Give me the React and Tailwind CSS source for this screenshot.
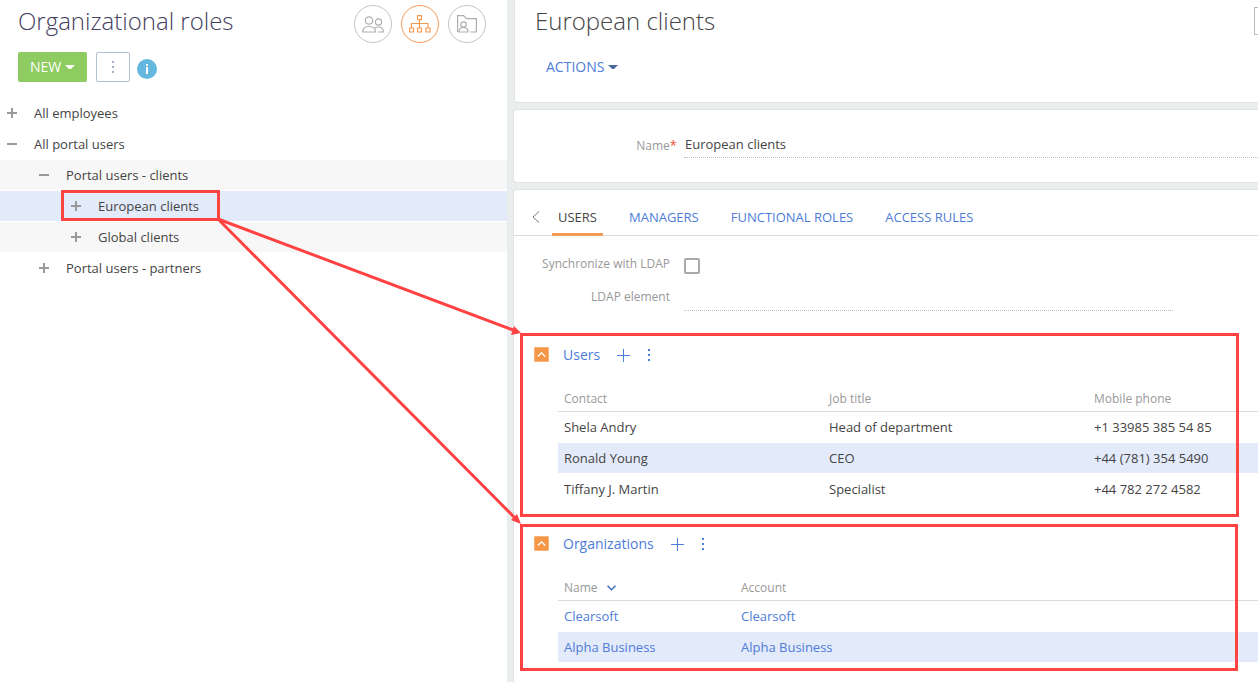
import React, { useState } from "react";

const treeRows = [
  { id: 1, name: "All employees", level: 0, open: false },
  { id: 2, name: "All portal users", level: 0, open: true },
  { id: 3, name: "Portal users - clients", level: 1, open: true, shaded: true },
  { id: 4, name: "European clients", level: 2, open: false, marked: true },
  { id: 5, name: "Global clients", level: 2, open: false, shaded: true },
  { id: 6, name: "Portal users - partners", level: 1, open: false },
];

const levelPadding = ["pl-[7px]", "pl-[39px]", "pl-[71px]"];

const users = [
  { name: "Shela Andry", job: "Head of department", phone: "+1 33985 385 54 85" },
  { name: "Ronald Young", job: "CEO", phone: "+44 (781) 354 5490" },
  { name: "Tiffany J. Martin", job: "Specialist", phone: "+44 782 272 4582" },
];

const organizations = [
  { name: "Clearsoft", account: "Clearsoft" },
  { name: "Alpha Business", account: "Alpha Business" },
];

const tabs = ["Users", "Managers", "Functional roles", "Access rules"];

const Caret = ({ className }) => (
  <svg width="10" height="5" viewBox="0 0 10 5" className={className}>
    <path d="M0 0h10L6 4H4z" fill="currentColor" />
  </svg>
);

const Dots = ({ className }) => (
  <svg width="2" height="12" viewBox="0 0 2 12" className={className}>
    <path d="M0 0h2v2H0zM0 5h2v2H0zM0 10h2v2H0z" fill="currentColor" />
  </svg>
);

const ToggleIcon = ({ open }) => (
  <svg width="10" height="10" viewBox="0 0 10 10" fill="#999">
    <path d="M0 4h10v2H0z" />
    {!open && <path d="M4 0h2v10H4z" />}
  </svg>
);

const UsersIcon = () => (
  <svg width="22" height="17" viewBox="0 0 22 17" fill="none" stroke="#adadad" strokeWidth="1.200">
    <circle cx="7" cy="4.500" r="3.700" />
    <circle cx="16.500" cy="6" r="3.100" />
    <path d="M.6 16c0-3.500 2.500-5.500 6.400-5.500s6.500 2 6.500 5.500zM13 12c1-.8 2-1 3.500-1 3 0 4.900 1.800 4.900 5h-5.400" />
  </svg>
);

const OrgIcon = () => (
  <svg width="22" height="18" viewBox="0 0 22 18" fill="none" stroke="#f39a54" strokeWidth="1.200">
    <path d="M8.500 .6h4v4h-4zM.6 13h4v4h-4zM8.500 13h4v4h-4zM17 13h4v4h-4zM10.500 4.500V13M2.500 13V8.500h16.500V13" />
  </svg>
);

const FolderIcon = () => (
  <svg width="20" height="18" viewBox="0 0 20 18" fill="none" stroke="#adadad" strokeWidth="1.200">
    <path d="M.6 17V.6h6l3 3h9.800v13.400h-6" />
    <circle cx="6.500" cy="9.500" r="2.700" />
    <path d="M2 17c0-2.800 1.700-4.500 4.500-4.500s4.500 1.700 4.500 4.500z" />
  </svg>
);

const RoundButton = ({ label, active, children }) => (
  <button
    aria-label={label}
    className={
      active
        ? "size-[38px] rounded-full border border-[#f39a54] flex items-center justify-center"
        : "size-[38px] rounded-full border border-[#c4c4c4] flex items-center justify-center"
    }
  >
    {children}
  </button>
);

const Callout = ({ className }) => (
  <div
    className={`absolute border-[3px] border-[#ff4343] pointer-events-none ${className}`}
  ></div>
);

const Arrows = () => (
  <svg
    width="530"
    height="530"
    viewBox="0 0 530 530"
    className="absolute top-0 left-0 pointer-events-none"
    stroke="#ff4343"
    fill="#ff4343"
  >
    <path d="M218 219L513 330M218 219L515 518" strokeWidth="3" fill="none" />
    <path d="M521 333L511 335L514 326z" stroke="none" />
    <path d="M521 524L511 520L517 514z" stroke="none" />
  </svg>
);

const DetailHeader = ({ title }) => (
  <div className="flex items-center h-6 pl-5">
    <button
      aria-label={`Collapse ${title}`}
      className="size-[15px] -mt-px bg-[#f49646] border border-[#f7b27a] rounded-[1px] flex items-center justify-center"
    >
      <svg width="9" height="5" viewBox="0 0 9 5" fill="none" stroke="#fff" strokeWidth="1.300">
        <path d="M.8 4.500l3.700-3.700 3.700 3.700" />
      </svg>
    </button>
    <h2 className="ml-3.5 text-[14px] text-[#4e7cd9]">{title}</h2>
    <button aria-label={`Add to ${title}`} className="ml-[17px]">
      <svg width="13" height="13" viewBox="0 0 13 13" stroke="#4e7cd9">
        <path d="M0 6.500h13M6.500 0v13" />
      </svg>
    </button>
    <button aria-label={`${title} menu`} className="ml-[18px] text-[#4e7cd9]">
      <Dots />
    </button>
  </div>
);

const LeftPanel = () => (
  <aside className="w-[507px] shrink-0 bg-white">
    <div className="flex justify-between pl-[18px] pr-[21px] pt-[5px] h-[52px]">
      <h1 className="text-[24px] leading-8 font-light text-[#444060]">
        Organizational roles
      </h1>
      <div className="flex gap-[9px] h-[38px]">
        <RoundButton label="Users">
          <UsersIcon />
        </RoundButton>
        <RoundButton label="Organizational roles" active>
          <OrgIcon />
        </RoundButton>
        <RoundButton label="Functional roles">
          <FolderIcon />
        </RoundButton>
      </div>
    </div>
    <div className="flex items-center pl-[18px] h-[30px]">
      <button className="w-[69px] h-[30px] rounded-[2px] bg-[#8ecb60] text-white text-[14px] font-medium flex items-center justify-center gap-1">
        NEW <Caret />
      </button>
      <button
        aria-label="More"
        className="ml-[9px] w-[34px] h-[30px] rounded-[2px] border border-[#b3c0d6] text-[#9fadc8] flex items-center justify-center"
      >
        <Dots />
      </button>
      <button
        aria-label="Info"
        className="ml-[7px] mt-1 size-5 rounded-full bg-[#64b8df] flex items-center justify-center"
      >
        <svg width="4" height="10" viewBox="0 0 4 10" fill="#fff">
          <path d="M1 0h2v2H1zM1 3h2v7H1z" />
        </svg>
      </button>
    </div>
    <ul className="mt-4 flex flex-col gap-px">
      {treeRows.map((row) => (
        <li
          key={row.id}
          className={`relative h-[30px] flex items-center gap-[17px] ${levelPadding[row.level]} ${
            row.marked ? "bg-[#e3eafa]" : row.shaded ? "bg-[#f7f7f7]" : ""
          }`}
        >
          <button aria-label={`Toggle ${row.name}`}>
            <ToggleIcon open={row.open} />
          </button>
          <span>{row.name}</span>
          {row.marked && <Callout className="left-[61px] -top-px w-[159px] h-[31px]" />}
        </li>
      ))}
    </ul>
  </aside>
);

const UsersTable = () => (
  <table className="ml-11 w-[795px] min-w-full table-fixed text-left">
    <thead>
      <tr className="h-7 border-b border-[#dcdcdc] text-[12px] text-[#999]">
        <th className="pl-1.5 pt-1 font-normal">Contact</th>
        <th className="pl-1.5 pt-1 font-normal">Job title</th>
        <th className="pl-1.5 pt-1 font-normal">Mobile phone</th>
      </tr>
    </thead>
    <tbody>
      {users.map((user) => (
        <tr
          key={user.name}
          className="h-[31px] border-b border-white even:bg-[#e3eafa]"
        >
          <td className="pl-1.5">{user.name}</td>
          <td className="pl-1.5">{user.job}</td>
          <td className="pl-1.5">{user.phone}</td>
        </tr>
      ))}
    </tbody>
  </table>
);

const OrganizationsTable = () => (
  <table className="ml-11 w-[795px] min-w-full table-fixed text-left">
    <thead>
      <tr className="h-7 border-b border-[#dcdcdc] text-[12px] text-[#999]">
        <th className="pl-1.5 pt-1 w-[177px] font-normal">
          <span className="flex items-center gap-[9px]">
            Name
            <svg width="9" height="6" viewBox="0 0 9 6" fill="none" stroke="#3d6fc0" strokeWidth="1.500">
              <path d="M.5 .8l4 4 4-4" />
            </svg>
          </span>
        </th>
        <th className="pl-1.5 pt-1 font-normal">Account</th>
      </tr>
    </thead>
    <tbody>
      {organizations.map((org) => (
        <tr
          key={org.name}
          className="h-[31px] border-b border-white even:bg-[#e3eafa] text-[#4e7cd9]"
        >
          <td className="pl-1.5">
            <a href="#name">{org.name}</a>
          </td>
          <td className="pl-1.5">
            <a href="#account">{org.account}</a>
          </td>
        </tr>
      ))}
    </tbody>
  </table>
);

const App = () => {
  const [activeTab, setActiveTab] = useState("Users");
  const [roleName, setRoleName] = useState("European clients");
  const [ldapSync, setLdapSync] = useState(false);

  return (
    <div className="relative flex min-h-screen overflow-hidden bg-[#e9eded] font-['Open_Sans',sans-serif] text-[13px] leading-5 text-[#444]">
      <LeftPanel />

      <main className="flex-1 min-w-0 pl-[7px] flex flex-col gap-2 overflow-hidden">
        <section className="ml-px h-[102px] bg-white rounded-bl-[3px] shadow-[0_0_0_1px_#e2e4e4]">
          <div className="flex justify-between pl-5 pt-[5px]">
            <h1 className="text-[24px] leading-8 font-light">European clients</h1>
            <button
              aria-label="Search"
              className="mt-0.5 -mr-6 w-7 h-7 shrink-0 border border-[#bbb]"
            ></button>
          </div>
          <button className="ml-[31px] mt-5 flex items-center gap-1 text-[14px] text-[#4e7cd9]">
            ACTIONS <Caret className="text-[#49689e]" />
          </button>
        </section>

        <section className="h-[72px] bg-white rounded-l-[3px] shadow-[0_0_0_1px_#e2e4e4] flex pt-6">
          <label
            htmlFor="role-name"
            className="w-[163px] mr-[7px] pt-px text-right text-[12px] text-[#999]"
          >
            Name<span className="text-[13px] text-[#f04f35]">*</span>
          </label>
          <input
            id="role-name"
            value={roleName}
            onChange={(e) => setRoleName(e.target.value)}
            className="flex-1 h-6 pl-px pb-1 border-b border-dotted border-[#bbb] outline-none"
          />
        </section>

        <section className="flex-1 bg-white rounded-tl-[3px] shadow-[0_0_0_1px_#e2e4e4]">
          <nav className="flex items-end h-[46px] border-b border-[#dcdcdc]">
            <button aria-label="Previous tabs" className="ml-[18px] mr-3 mb-3">
              <svg width="8" height="12" viewBox="0 0 8 12" fill="none" stroke="#777">
                <path d="M7 .5L1 6l6 5.500" />
              </svg>
            </button>
            <div className="flex gap-5 -mb-px">
              {tabs.map((tab) => (
                <button
                  key={tab}
                  onClick={() => setActiveTab(tab)}
                  className={
                    activeTab === tab
                      ? "px-1.5 pb-1.5 uppercase border-b-[3px] border-[#f39a54]"
                      : "px-1.5 pb-1.5 uppercase border-b-[3px] border-transparent text-[#4e7cd9]"
                  }
                >
                  {tab}
                </button>
              ))}
            </div>
          </nav>

          <div className="flex pt-[18px] text-[12px] text-[#999]">
            <label htmlFor="ldap-sync" className="w-[156px] mr-3.5 text-right">
              Synchronize with LDAP
            </label>
            <input
              id="ldap-sync"
              type="checkbox"
              checked={ldapSync}
              onChange={(e) => setLdapSync(e.target.checked)}
              className="mt-1 size-4 appearance-none rounded-[2px] border-2 border-[#aaa] checked:bg-[#aaa]"
            />
          </div>
          <div className="flex pt-[13px] text-[12px] text-[#999]">
            <label htmlFor="ldap-element" className="w-[156px] mr-3.5 text-right">
              LDAP element
            </label>
            <input
              id="ldap-element"
              className="flex-1 mr-[85px] h-6 border-b border-dotted border-[#bbb] outline-none"
            />
          </div>

          <div className="relative mt-[22px] pt-2.5 h-[184px]">
            <DetailHeader title="Users" />
            <div className="mt-4">
              <UsersTable />
            </div>
            <Callout className="left-1.5 right-[19px] top-0 bottom-0" />
          </div>

          <div className="relative mt-[7px] pt-2 h-[147px]">
            <DetailHeader title="Organizations" />
            <div className="mt-4">
              <OrganizationsTable />
            </div>
            <Callout className="left-1.5 right-5 top-0 bottom-0" />
          </div>
        </section>
      </main>

      <Arrows />
    </div>
  );
};

export default App;
